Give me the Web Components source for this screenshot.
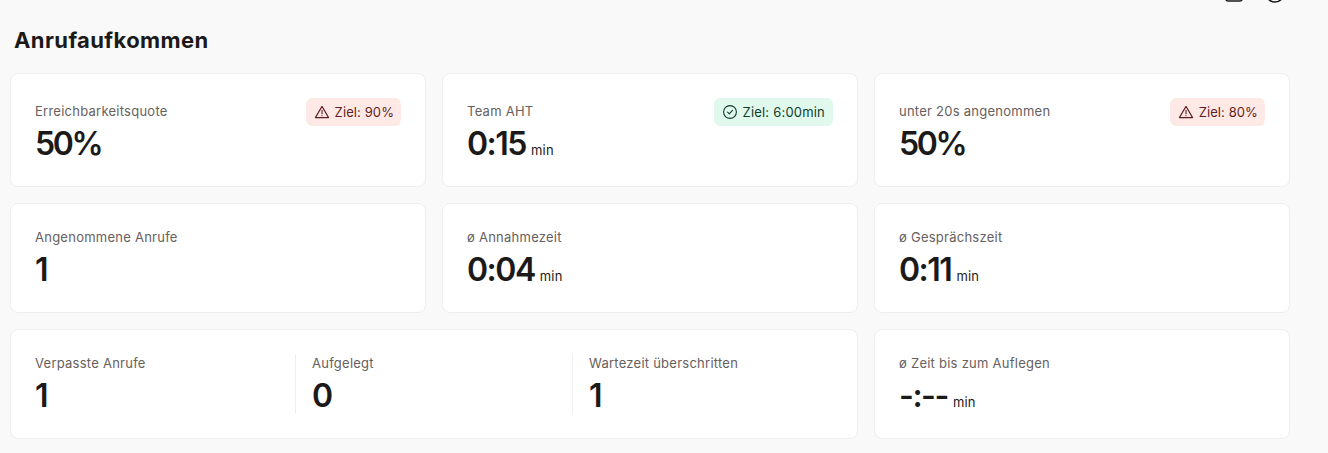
<!DOCTYPE html>
<html lang="de">
<head>
<meta charset="utf-8">
<title>Anrufaufkommen</title>
<style>
    html, body { margin: 0; height: 100%; overflow: hidden; }
    body { background: #f9f9f9; font-family: Inter, "Liberation Sans", sans-serif; color: #1c1a19; }
</style>
</head>
<body>
<call-dashboard></call-dashboard>

<script>
const warnIcon = `<svg width="16" height="16" viewBox="0 0 16 16" fill="none" stroke="currentColor" stroke-width="1.1" stroke-linejoin="round" stroke-linecap="round"><path d="M8 2.4 14.6 13.6H1.4Z"/><path d="M8 6.4v3.4"/><path d="M8 11.6v.1"/></svg>`;
const okIcon = `<svg width="16" height="16" viewBox="0 0 16 16" fill="none" stroke="currentColor" stroke-width="1.1" stroke-linejoin="round" stroke-linecap="round"><circle cx="8" cy="8" r="6.4"/><path d="M5.6 8.2 7.3 9.9 10.5 6.4"/></svg>`;

class GoalBadge extends HTMLElement {
    constructor() {
        super();
        this.attachShadow({ mode: 'open' });
        const ok = this.getAttribute('type') === 'ok';
        this.shadowRoot.innerHTML = `
        <style>
            :host{
                display: inline-flex;
                align-items: center;
                gap: 5px;
                height: 28px;
                padding: 0 ${ok ? '8px' : '7px'} 0 8px;
                border-radius: 6px;
                font-size: 13px;
                letter-spacing: ${ok ? '0.2px' : '0.1px'};
                white-space: nowrap;
                background: ${ok ? '#e1f8ed' : '#ffe9e7'};
                color: ${ok ? '#0f3d2e' : '#5f1f20'};
            }
            svg{ display: block; flex: none; }
        </style>
        ${ok ? okIcon : warnIcon}<slot></slot>
        `;
    }
}

class StatItem extends HTMLElement {
    constructor() {
        super();
        this.attachShadow({ mode: 'open' });
        const unit = this.getAttribute('unit');
        this.shadowRoot.innerHTML = `
        <style>
            :host{
                display: block;
                min-width: 0;
            }
            #label{
                font-size: 13px;
                line-height: 18px;
                margin-bottom: 6px;
                letter-spacing: 0.25px;
                color: #67605d;
            }
            /* first row: label sits next to the badge */
            :host([tall]) #label{
                line-height: 26px;
                margin-bottom: 2px;
            }
            #row{
                display: flex;
                align-items: baseline;
                gap: 5px;
                height: 36px;
                line-height: 36px;
            }
            #value{
                font-size: 32px;
                font-weight: 600;
                letter-spacing: -1.5px;
                color: #1c1a19;
            }
            /* the percent sign runs narrower than in Inter */
            :host([tight]) #value{
                letter-spacing: -2.4px;
            }
            #unit{
                font-size: 13px;
                letter-spacing: 0.2px;
                color: #1c1a19;
            }
        </style>
        <div id="label">${this.getAttribute('label')}</div>
        <div id="row">
            <span id="value">${this.getAttribute('value')}</span>
            ${unit ? `<span id="unit">${unit}</span>` : ''}
        </div>
        `;
    }
}

class StatCard extends HTMLElement {
    constructor() {
        super();
        this.attachShadow({ mode: 'open' });
        this.shadowRoot.innerHTML = `
        <style>
            :host{
                display: flex;
                justify-content: space-between;
                align-items: flex-start;
                box-sizing: border-box;
                padding: 24px;
                background: #fff;
                border: 1px solid #eeeeee;
                border-radius: 8px;
                min-width: 0;
            }
            :host([wide]){
                grid-column: span 2;
            }
        </style>
        <slot></slot>
        <slot name="badge"></slot>
        `;
    }
}

class SplitStats extends HTMLElement {
    constructor() {
        super();
        this.attachShadow({ mode: 'open' });
        this.shadowRoot.innerHTML = `
        <style>
            :host{
                display: grid;
                grid-template-columns: 260px 277px 1fr;
                flex: 1;
            }
            ::slotted(stat-item){
                padding-left: 16px;
                border-left: 1px solid #eeeeee;
            }
            ::slotted(stat-item:first-child){
                padding-left: 0;
                border-left: 0;
            }
        </style>
        <slot></slot>
        `;
    }
}

class CallDashboard extends HTMLElement {
    constructor() {
        super();
        this.attachShadow({ mode: 'open' });
        this.shadowRoot.innerHTML = `
        <style>
            :host{
                display: block;
                width: 1280px;
                margin-left: 10px;
            }
            #tools{
                display: flex;
                justify-content: flex-end;
                gap: 21px;
                height: 3px;
                overflow: hidden;
                padding-right: 5px;
                color: #1c1a19;
            }
            #tools svg{ display: block; margin-top: -17px; }
            h2{
                margin: 0;
                padding: 22px 0 0 4px;
                height: 48px;
                box-sizing: border-box;
                font-size: 22px;
                line-height: 30px;
                font-weight: 700;
                letter-spacing: 0.4px;
            }
            #grid{
                display: grid;
                grid-template-columns: repeat(3, 416px);
                grid-template-rows: 114px 110px 110px;
                gap: 16px;
                margin-top: 22px;
            }
        </style>
        <div id="tools">
            <svg width="20" height="20" viewBox="0 0 20 20" fill="none" stroke="currentColor" stroke-width="1.6"><rect x="2" y="2" width="16" height="16" rx="2"/></svg>
            <svg width="20" height="20" viewBox="0 0 20 20" fill="none" stroke="currentColor" stroke-width="1.6"><circle cx="10" cy="10" r="9"/></svg>
        </div>
        <h2>Anrufaufkommen</h2>
        <div id="grid">
            <stat-card>
                <stat-item tall tight label="Erreichbarkeitsquote" value="50%"></stat-item>
                <goal-badge slot="badge" type="warn">Ziel: 90%</goal-badge>
            </stat-card>
            <stat-card>
                <stat-item tall label="Team AHT" value="0:15" unit="min"></stat-item>
                <goal-badge slot="badge" type="ok">Ziel: 6:00min</goal-badge>
            </stat-card>
            <stat-card>
                <stat-item tall tight label="unter 20s angenommen" value="50%"></stat-item>
                <goal-badge slot="badge" type="warn">Ziel: 80%</goal-badge>
            </stat-card>
            <stat-card>
                <stat-item label="Angenommene Anrufe" value="1"></stat-item>
            </stat-card>
            <stat-card>
                <stat-item label="ø Annahmezeit" value="0:04" unit="min"></stat-item>
            </stat-card>
            <stat-card>
                <stat-item label="ø Gesprächszeit" value="0:11" unit="min"></stat-item>
            </stat-card>
            <stat-card wide>
                <split-stats>
                    <stat-item label="Verpasste Anrufe" value="1"></stat-item>
                    <stat-item label="Aufgelegt" value="0"></stat-item>
                    <stat-item label="Wartezeit überschritten" value="1"></stat-item>
                </split-stats>
            </stat-card>
            <stat-card>
                <stat-item label="ø Zeit bis zum Auflegen" value="-:--" unit="min"></stat-item>
            </stat-card>
        </div>
        `;
    }
}

customElements.define('goal-badge', GoalBadge);
customElements.define('stat-item', StatItem);
customElements.define('stat-card', StatCard);
customElements.define('split-stats', SplitStats);
customElements.define('call-dashboard', CallDashboard);
</script>
</body>
</html>
